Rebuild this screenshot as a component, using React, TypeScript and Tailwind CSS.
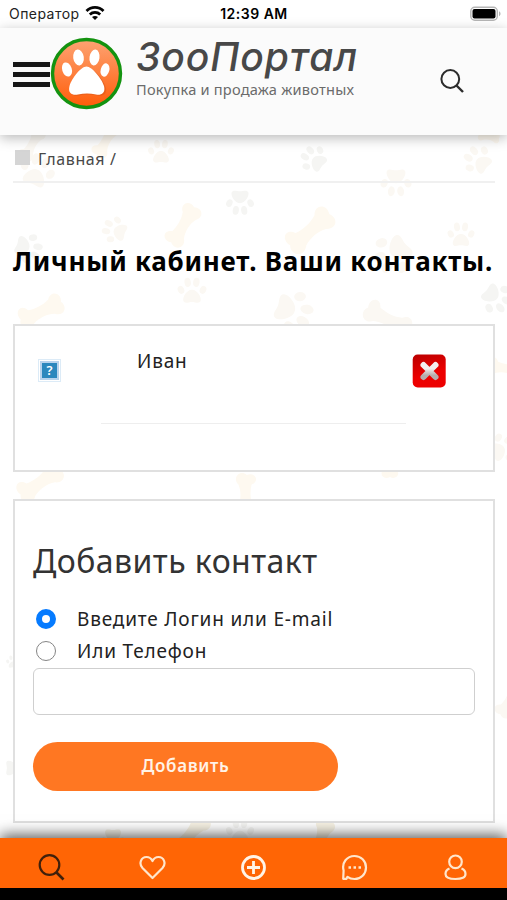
import { useState } from "react";

type Print = { kind: "paw" | "bone"; x: number; y: number; size: number; turn: number; color: string };

const sand = "#fbf8f3";
const cream = "#fef9f0";
const grey = "#f5f5f3";

// faint paw prints and bones behind the page content
const prints: Print[] = [
  { kind: "bone", x: 32, y: 144, size: 32, turn: -60, color: sand },
  { kind: "bone", x: 106, y: 140, size: 34, turn: -60, color: cream },
  { kind: "paw", x: 37, y: 171, size: 36, turn: 20, color: sand },
  { kind: "paw", x: 161, y: 152, size: 26, turn: 0, color: sand },
  { kind: "paw", x: 314, y: 159, size: 28, turn: -50, color: grey },
  { kind: "paw", x: 396, y: 182, size: 31, turn: 180, color: sand },
  { kind: "paw", x: 478, y: 160, size: 30, turn: -50, color: sand },
  { kind: "bone", x: 489, y: 137, size: 20, turn: 10, color: cream },
  { kind: "paw", x: 240, y: 202, size: 28, turn: 180, color: grey },
  { kind: "paw", x: 115, y: 230, size: 27, turn: -70, color: sand },
  { kind: "bone", x: 183, y: 225, size: 42, turn: -58, color: cream },
  { kind: "paw", x: 28, y: 248, size: 30, turn: 110, color: grey },
  { kind: "bone", x: 310, y: 230, size: 50, turn: -40, color: cream },
  { kind: "paw", x: 461, y: 235, size: 27, turn: 0, color: sand },
  { kind: "paw", x: 393, y: 254, size: 42, turn: -130, color: sand },
  { kind: "paw", x: 192, y: 291, size: 29, turn: 0, color: sand },
  { kind: "bone", x: 41, y: 311, size: 44, turn: -25, color: cream },
  { kind: "paw", x: 293, y: 311, size: 42, turn: 110, color: sand },
  { kind: "bone", x: 388, y: 319, size: 46, turn: 28, color: sand },
  { kind: "paw", x: 496, y: 298, size: 32, turn: 130, color: grey },
  { kind: "bone", x: 506, y: 368, size: 34, turn: 10, color: cream },
  { kind: "paw", x: 503, y: 448, size: 30, turn: 60, color: sand },
  { kind: "bone", x: 40, y: 482, size: 46, turn: -35, color: cream },
  { kind: "bone", x: 246, y: 495, size: 40, turn: 90, color: cream },
  { kind: "bone", x: 390, y: 460, size: 34, turn: 90, color: cream },
  { kind: "paw", x: 13, y: 662, size: 14, turn: 0, color: grey },
  { kind: "bone", x: 510, y: 699, size: 36, turn: -60, color: sand },
  { kind: "paw", x: 16, y: 768, size: 24, turn: 90, color: grey },
  { kind: "paw", x: 113, y: 840, size: 26, turn: 180, color: "#f4f1e6" },
  { kind: "bone", x: 190, y: 834, size: 44, turn: -50, color: "#f7f2e4" },
  { kind: "paw", x: 240, y: 832, size: 28, turn: 0, color: grey },
  { kind: "bone", x: 320, y: 840, size: 40, turn: -70, color: "#f7f2e4" },
];

const tabStroke = "#ffe6cc";

function PrintShape({ kind }: { kind: Print["kind"] }) {
  if (kind === "bone") {
    return <path d="M-26 -14C-36 -36 -58 -22 -50 -2C-64 14 -44 36 -26 19C-10 12 10 12 26 19C42 34 60 18 50 0C60 -18 40 -34 26 -17C10 -10 -10 -10 -26 -14Z" />;
  }
  return (
    <>
      <path d="M0 -4C15 -6 34 20 30 34C25 46 12 38 0 38C-12 38 -25 46 -30 34C-34 20 -15 -6 0 -4Z" />
      <ellipse cx="-15" cy="-30" rx="11" ry="16" transform="rotate(-8 -15 -30)" />
      <ellipse cx="15" cy="-30" rx="11" ry="16" transform="rotate(8 15 -30)" />
      <ellipse cx="-38" cy="-4" rx="11" ry="14" transform="rotate(-25 -38 -4)" />
      <ellipse cx="38" cy="-4" rx="11" ry="14" transform="rotate(25 38 -4)" />
    </>
  );
}

function Backdrop() {
  return (
    <svg className="absolute inset-0" width="507" height="900" aria-hidden="true">
      {prints.map((p) => (
        <g key={`${p.x}-${p.y}`} fill={p.color} transform={`translate(${p.x} ${p.y}) rotate(${p.turn}) scale(${p.size / 100})`}>
          <PrintShape kind={p.kind} />
        </g>
      ))}
    </svg>
  );
}

function StatusBar() {
  return (
    <div className="grid h-7 grid-cols-3 items-center bg-white pl-[9px] pr-[6px] font-['Inter','Liberation_Sans',sans-serif] text-[14px] text-[#222]">
      <div className="flex items-center gap-[5px]">
        <span className="-mt-[2px] tracking-[0.45px]">Оператор</span>
        <svg className="mb-[2px]" width="20" height="16" viewBox="0 0 20 16" fill="none" stroke="#050505" strokeWidth="2.8">
          <path d="M1.5 6C6.3 1.2 13.7 1.2 18.5 6" />
          <path d="M4.8 9.4C7.8 6.6 12.2 6.6 15.2 9.4" />
          <path d="M7 12C8.7 10.5 11.3 10.5 13 12L10 15Z" fill="#050505" stroke="none" />
        </svg>
      </div>
      <span className="-ml-[2px] -mt-[2px] text-center font-semibold tracking-[0.5px] text-black">12:39 AM</span>
      <svg className="mb-px justify-self-end" width="31" height="16" viewBox="0 0 31 16">
        <rect x="0.8" y="1.3" width="26.5" height="13" rx="4" fill="#fff" stroke="#b5b5b5" strokeWidth="1.4" />
        <rect x="2.5" y="3" width="23" height="9.5" rx="2" fill="#000" />
        <path d="M29 5.3C31 6.2 31 9.2 29 10.2Z" fill="#b5b5b5" />
      </svg>
    </div>
  );
}

function PawLogo() {
  return (
    <svg width="73" height="73" viewBox="0 0 73 73">
      <defs>
        <linearGradient id="logoFill" x1="0" y1="0" x2="0" y2="1">
          <stop offset="0" stopColor="#fda373" />
          <stop offset="1" stopColor="#ff5c08" />
        </linearGradient>
      </defs>
      <circle cx="36.5" cy="36.5" r="34" fill="url(#logoFill)" stroke="#149310" strokeWidth="3.4" />
      <path d="M38 31C44 31 54 43 56 51C57 58 52 59.500 47 58.500C41 57 35 57 29 58.500C24 59.500 19 58 21 51C23 44 32 31 38 31Z" fill="#c34a16" opacity="0.35" />
      <g fill="#fff">
        <path d="M36.500 29.500C42 29.500 52 42 54 49C56 57 50 58.500 46 57.500C40 56 34 56 28 57.500C23 58.500 17.500 57 19.500 49C22 41 31 29.500 36.500 29.500Z" />
        <ellipse cx="28.500" cy="20.500" rx="5.300" ry="8" transform="rotate(-8 28.500 20.500)" />
        <ellipse cx="44.500" cy="20.500" rx="5" ry="8" transform="rotate(8 44.500 20.500)" />
        <ellipse cx="17" cy="32.500" rx="4.800" ry="7.300" transform="rotate(-18 17 32.500)" />
        <ellipse cx="55" cy="33" rx="4.300" ry="6.800" transform="rotate(15 55 33)" />
      </g>
    </svg>
  );
}

function Header() {
  return (
    <header className="relative flex h-[107px] items-start bg-[#fbfbfb] pl-[13px] shadow-[0_3px_12px_rgba(0,0,0,0.28)]">
      <button className="mt-[34px] flex w-[37px] flex-col gap-[5px]" aria-label="Меню">
        <span className="h-[5px] w-full bg-[#171717]" />
        <span className="h-[5px] w-full bg-[#171717]" />
        <span className="h-[5px] w-full bg-[#171717]" />
      </button>
      <div className="mt-[9px]">
        <PawLogo />
      </div>
      <div className="ml-[13px] mt-[6px] whitespace-nowrap">
        <div className="h-[45px] font-['Inter',sans-serif] text-[39px] font-medium italic leading-[46px] tracking-[0.9px] text-[#484848] [font-feature-settings:'cv11']">ЗооПортал</div>
        <div className="text-[14.6px] leading-5 tracking-[0.22px] text-[#6b6b6b]">Покупка и продажа животных</div>
      </div>
      <svg className="absolute right-[42px] top-[40px]" width="26" height="26" viewBox="0 0 26 26" fill="none" stroke="#2c2c2c" strokeWidth="2">
        <circle cx="11.300" cy="11" r="8.900" />
        <path d="M17.500 17.500L24 24" strokeWidth="2.400" />
      </svg>
    </header>
  );
}

function ContactCard() {
  return (
    <section className="mt-[45px] flex h-[148px] items-start border-2 border-[#e0e0e0] bg-white pl-[23px]">
      <div className="mt-[33px] flex h-[23px] w-[23px] items-center justify-center border border-[#dcebf7] bg-white">
        <div className="flex h-[19px] w-[19px] items-center justify-center border-2 border-[#b8d3ec] bg-[#2c88bd] text-[13px] font-semibold leading-none text-white">?</div>
      </div>
      <div className="ml-[40px] h-[98px] w-[305px] border-b border-[#eeeeee] pl-[36px] pt-[21px] text-[19px] leading-[28px] tracking-[0.8px] text-[#222]">Иван</div>
      <button className="ml-[6px] mt-[28px]" aria-label="Удалить">
        <svg width="34" height="34" viewBox="0 0 34 34">
          <defs>
            <linearGradient id="redFill" x1="0" y1="0" x2="0.300" y2="1">
              <stop offset="0" stopColor="#b90000" />
              <stop offset="0.700" stopColor="#ed0000" />
            </linearGradient>
            <linearGradient id="crossFill" gradientUnits="userSpaceOnUse" x1="0" y1="8" x2="0" y2="27">
              <stop offset="0.350" stopColor="#f3eeee" />
              <stop offset="0.700" stopColor="#b6adad" />
            </linearGradient>
          </defs>
          <rect x="0.700" y="0.500" width="33" height="33" rx="5" fill="url(#redFill)" />
          <path d="M11.500 11L23.500 23M23.500 11L11.500 23" stroke="url(#crossFill)" strokeWidth="6" strokeLinecap="round" />
        </svg>
      </button>
    </section>
  );
}

function AddContactForm() {
  const [mode, setMode] = useState("login");
  const [value, setValue] = useState("");

  const options = [
    { id: "login", label: "Введите Логин или E-mail" },
    { id: "phone", label: "Или Телефон" },
  ];

  return (
    <form onSubmit={(e) => e.preventDefault()} className="mt-[27px] h-[324px] border-2 border-[#e0e0e0] bg-white px-[18px] pt-[38px]">
      <h2 className="text-[32px] leading-[44px] tracking-[0.45px] text-[#333]">Добавить контакт</h2>
      <div className="mt-[20px]">
        {options.map((o) => (
          <label key={o.id} className="flex h-8 items-center gap-[21px] whitespace-nowrap pl-[3px] text-[19px] tracking-[0.82px] text-[#222]">
            <input
              type="radio"
              name="mode"
              checked={mode === o.id}
              onChange={() => setMode(o.id)}
              className="h-5 w-5 appearance-none rounded-full border-[1.5px] border-[#858585] bg-white checked:border-[6px] checked:border-[#067bff]"
            />
            <span>{o.label}</span>
          </label>
        ))}
      </div>
      <input value={value} onChange={(e) => setValue(e.target.value)} className="mt-px block h-[47px] w-full rounded-[6px] border border-[#cfcfcf] bg-white px-3" />
      <button type="submit" className="mt-[27px] h-[49px] w-[305px] rounded-full bg-[#ff7722] pb-[2px] text-[17px] font-semibold tracking-[0.65px] text-[#fff2e6]">
        Добавить
      </button>
    </form>
  );
}

function TabBar() {
  return (
    <nav className="relative mt-[15px] flex h-[50px] items-center justify-around bg-[#ff6505] px-px pt-[8px] shadow-[0_-3px_14px_rgba(0,0,0,0.65)]">
      <svg width="27" height="27" viewBox="0 0 27 27" fill="none" stroke="#40200b" strokeWidth="2.200">
        <circle cx="11.500" cy="11" r="9.800" />
        <path d="M18 18L25.500 25.500" strokeWidth="2.700" />
      </svg>
      <svg width="27" height="27" viewBox="0 0 27 27" fill="none" stroke={tabStroke} strokeWidth="2.200" strokeLinejoin="round">
        <path d="M13.500 24L3.500 14C-0.500 9.500 2 3 7.500 3C10.500 3 12.500 5 13.500 7C14.500 5 16.500 3 19.500 3C25 3 27.500 9.500 23.500 14Z" />
      </svg>
      <svg width="27" height="27" viewBox="0 0 27 27" fill="none" stroke="#fff4e8" strokeWidth="2.800">
        <circle cx="13.500" cy="13.500" r="11" />
        <path d="M13.500 7V20M7 13.500H20" strokeWidth="2.800" />
      </svg>
      <svg width="27" height="27" viewBox="0 0 27 27" fill="none" stroke={tabStroke} strokeWidth="2.200">
        <path d="M2.200 24.800L2.600 16.500C0.500 8.500 6 2 13.500 2C20 2 25 7 25 13.500C25 20 20 25 13.500 25C10.500 25 8 24 6.500 22.800L5.500 24.800Z" strokeLinejoin="round" />
        <path d="M7.500 13.500H10M12.500 13.500H15M17.500 13.500H20" strokeWidth="2.400" />
      </svg>
      <svg width="27" height="27" viewBox="0 0 27 27" fill="none" stroke={tabStroke} strokeWidth="2.200">
        <circle cx="13.500" cy="7.800" r="6.300" />
        <path d="M7.500 14.500C5 15.500 3.500 17.500 3.500 20C3.500 23.500 7 25 13.500 25C20 25 23.500 23.500 23.500 20C23.500 17.500 22 15.500 19.500 14.500" />
      </svg>
    </nav>
  );
}

function App() {
  return (
    <div className="relative flex h-[900px] w-[507px] flex-col overflow-hidden bg-white font-['Noto_Sans','Open_Sans',sans-serif]">
      <Backdrop />
      <div className="relative z-10">
        <StatusBar />
        <Header />
      </div>
      <main className="relative mx-[13px] mr-[12px]">
        <div className="flex h-[48px] items-center gap-2 border-b-2 border-[#f0f0f0] pl-[2px] text-[16px] tracking-[0.6px] text-[#484848]">
          <span className="mb-[2px] h-[15px] w-[15px] bg-[#d5d5d5]" />
          <span className="mt-[2px]">Главная /</span>
        </div>
        <h1 className="mt-[61px] whitespace-nowrap text-[26px] font-bold leading-[35px] tracking-[0.76px] text-black">Личный кабинет. Ваши контакты.</h1>
        <ContactCard />
        <AddContactForm />
      </main>
      <TabBar />
      <div className="relative h-3 bg-black" />
    </div>
  );
}

export default App;
